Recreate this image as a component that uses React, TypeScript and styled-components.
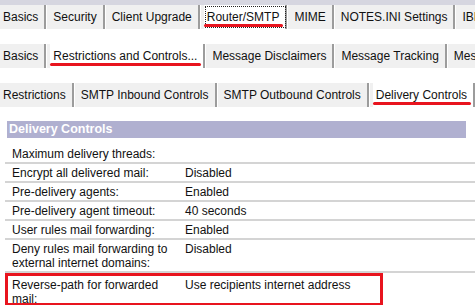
import styled, { createGlobalStyle } from 'styled-components'

const Global = createGlobalStyle`
  *, *::before, *::after {
    box-sizing: border-box;
  }
  html, body {
    margin: 0;
    padding: 0;
    background: #ffffff;
  }
  body {
    font-family: "Liberation Sans", Arial, sans-serif;
    font-size: 12px;
    color: #111;
    width: 475px;
    height: 305px;
    overflow: hidden;
  }
`

type Tab = { label: string; selected?: boolean }

const topTabs: Tab[] = [
  { label: 'Basics' },
  { label: 'Security' },
  { label: 'Client Upgrade' },
  { label: 'Router/SMTP', selected: true },
  { label: 'MIME' },
  { label: 'NOTES.INI Settings' },
  { label: 'IBM Traveler' },
]

const midTabs: Tab[] = [
  { label: 'Basics' },
  { label: 'Restrictions and Controls...', selected: true },
  { label: 'Message Disclaimers' },
  { label: 'Message Tracking' },
  { label: 'Message Recall' },
]

const lowTabs: Tab[] = [
  { label: 'Restrictions' },
  { label: 'SMTP Inbound Controls' },
  { label: 'SMTP Outbound Controls' },
  { label: 'Delivery Controls', selected: true },
]

const rows: { label: string; value: string }[] = [
  { label: 'Encrypt all delivered mail:', value: 'Disabled' },
  { label: 'Pre-delivery agents:', value: 'Enabled' },
  { label: 'Pre-delivery agent timeout:', value: '40 seconds' },
  { label: 'User rules mail forwarding:', value: 'Enabled' },
  { label: 'Deny rules mail forwarding to external internet domains:', value: 'Disabled' },
]

const TabStrip = ({ tabs, focus, top }: { tabs: Tab[]; focus?: boolean; top?: boolean }) => (
  <Strip $top={top}>
    {tabs.map((t, i) => (
      <TabItem key={i} $selected={t.selected} $focus={focus && t.selected}>
        {t.label}
        {t.selected && <Underline />}
      </TabItem>
    ))}
  </Strip>
)

export default function App() {
  return (
    <Page>
      <Global />
      <TabStrip tabs={topTabs} focus top />
      <TabStrip tabs={midTabs} />
      <TabStrip tabs={lowTabs} />
      <Section>
        <Header>Delivery Controls</Header>
        <Row $first>
          <Label>Maximum delivery threads:</Label>
          <Value />
        </Row>
        {rows.map((r, i) => (
          <Row key={i}>
            <Label>{r.label}</Label>
            <Value>{r.value}</Value>
          </Row>
        ))}
        <Marked>
          <Label>Reverse-path for forwarded mail:</Label>
          <Value>Use recipients internet address</Value>
        </Marked>
      </Section>
    </Page>
  )
}

const Page = styled.div`
  display: flex;
  flex-direction: column;
  width: 475px;
  height: 305px;
  overflow: hidden;
`

const Strip = styled.div<{ $top?: boolean }>`
  display: flex;
  align-items: stretch;
  flex: none;
  height: ${p => (p.$top ? '29px' : '24px')};
  margin-top: ${p => (p.$top ? '0' : '15px')};
  background: #f0f0f0;
  border-top: ${p => (p.$top ? '5px solid #d6d6e0' : 'none')};
  white-space: nowrap;
  overflow: hidden;
`

const TabItem = styled.div<{ $selected?: boolean; $focus?: boolean }>`
  position: relative;
  display: flex;
  align-items: center;
  flex: none;
  padding: 0 6px 0 3px;
  margin-left: 4px;
  background: ${p => (p.$selected ? '#ffffff' : 'transparent')};
  border-right: 2px solid #9c9c9c;
  box-shadow: 1px 0 0 #ffffff;
  outline: ${p => (p.$focus ? '1px dotted #222' : 'none')};
  outline-offset: -2px;
  color: #111;

  &:first-child {
    margin-left: 0;
  }
`

const Underline = styled.span`
  position: absolute;
  left: 0;
  right: 2px;
  bottom: 2px;
  height: 3px;
  border-radius: 2px;
  background: #e8141e;
`

const Section = styled.div`
  display: flex;
  flex-direction: column;
  margin-top: 14px;
  padding-left: 5px;
`

const Header = styled.div`
  margin: 0 9px 0 2px;
  height: 17px;
  line-height: 17px;
  padding-left: 2px;
  background: #b0b0d0;
  color: #ffffff;
  font-weight: bold;
  font-size: 12.5px;
`

const Row = styled.div<{ $first?: boolean }>`
  display: grid;
  grid-template-columns: 173px 1fr;
  align-items: start;
  padding: ${p => (p.$first ? '9px' : '2px')} 0 1px 7px;
  line-height: 14px;
  border-bottom: 2px solid #d4d4d4;
`

const Marked = styled.div`
  display: grid;
  grid-template-columns: 173px 1fr;
  width: 378px;
  padding: 2px 0 0 4px;
  line-height: 14px;
  border: 3px solid #e8141e;
  height: 33px;
  overflow: hidden;
`

const Label = styled.div`
  padding-right: 6px;
`

const Value = styled.div``
